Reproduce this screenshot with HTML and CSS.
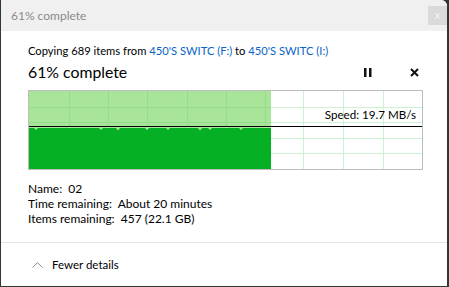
FILE: index.html
```html
<!DOCTYPE html>
<html lang="en">
<head>
    <meta charset="UTF-8">
    <title>61% complete</title>
    <link rel="stylesheet" href="styles.css">
</head>
<body>
<div class="window">
    <div class="titlebar">
        <span class="title">61% complete</span>
        <span class="title-close">x</span>
    </div>
    <div class="main">
        <div class="from">Copying 689 items from <a href="#">450'S SWITC (F:)</a> to <a href="#">450'S SWITC (I:)</a></div>
        <div class="status">
            <span class="percent">61% complete</span>
            <span class="controls">
                <svg class="pause" width="8" height="9" viewBox="0 0 8 9"><rect x="0" y="0" width="2.5" height="9" fill="#111"/><rect x="5" y="0" width="2.5" height="9" fill="#111"/></svg>
                <svg class="stop" width="9" height="9" viewBox="0 0 9 9"><path d="M1 1L8 8M8 1L1 8" stroke="#111" stroke-width="2"/></svg>
            </span>
        </div>
        <div class="graph">
            <svg width="393" height="78" viewBox="0 0 393 78">
                <rect x="0" y="0" width="242" height="78" fill="#a8e49a"/>
                <g stroke="#cdf2d1" stroke-width="1">
                    <line x1="0" y1="16.5" x2="393" y2="16.5"/>
                    <line x1="0" y1="31.5" x2="393" y2="31.5"/>
                    <line x1="0" y1="47.5" x2="393" y2="47.5"/>
                    <line x1="0" y1="62.5" x2="393" y2="62.5"/>
                    <line x1="40.5" y1="0" x2="40.5" y2="78"/>
                    <line x1="79.5" y1="0" x2="79.5" y2="78"/>
                    <line x1="118.5" y1="0" x2="118.5" y2="78"/>
                    <line x1="158.5" y1="0" x2="158.5" y2="78"/>
                    <line x1="197.5" y1="0" x2="197.5" y2="78"/>
                    <line x1="236.5" y1="0" x2="236.5" y2="78"/>
                    <line x1="274.5" y1="0" x2="274.5" y2="78"/>
                    <line x1="314.5" y1="0" x2="314.5" y2="78"/>
                    <line x1="354.5" y1="0" x2="354.5" y2="78"/>
                </g>
                <g stroke="#97dc88" stroke-width="1">
                    <line x1="0" y1="16.5" x2="242" y2="16.5"/>
                    <line x1="0" y1="31.5" x2="242" y2="31.5"/>
                    <line x1="40.5" y1="0" x2="40.5" y2="36"/>
                    <line x1="79.5" y1="0" x2="79.5" y2="36"/>
                    <line x1="118.5" y1="0" x2="118.5" y2="36"/>
                    <line x1="158.5" y1="0" x2="158.5" y2="36"/>
                    <line x1="197.5" y1="0" x2="197.5" y2="36"/>
                    <line x1="236.5" y1="0" x2="236.5" y2="36"/>
                </g>
                <path d="M0 37 L5 37 L7 39 L9 37 L70 37 L72 39 L74 37 L87 37 L89 39.5 L91 37 L116 37 L118 39 L120 37 L137 37 L139 39 L141 37 L169 37 L171 39.5 L173 37 L179 37 L181 39 L183 37 L210 37 L212 39 L214 37 L242 37 L242 78 L0 78 Z" fill="#06b025"/>
                <line x1="0" y1="35.5" x2="393" y2="35.5" stroke="#000" stroke-width="1"/>
                <text x="387" y="28" text-anchor="end" class="speed">Speed: 19.7 MB/s</text>
            </svg>
        </div>
        <div class="details">
            <div>Name:&nbsp; 02</div>
            <div>Time remaining:&nbsp; About 20 minutes</div>
            <div>Items remaining:&nbsp; 457 (22.1 GB)</div>
        </div>
    </div>
    <div class="footer">
        <svg width="11" height="6" viewBox="0 0 11 6"><path d="M0.5 5.5L5.5 0.7L10.5 5.5" fill="none" stroke="#8a8a8a" stroke-width="1"/></svg>
        <span>Fewer details</span>
    </div>
</div>
</body>
</html>
```

FILE: styles.css
```css
* {
    margin: 0;
    padding: 0;
    box-sizing: border-box;
}

body {
    background: #2f3a34;
    font-family: Lato, "Noto Sans", sans-serif;
    font-size: 11.5px;
    color: #000;
}

.window {
    width: 446px;
    height: 286px;
    margin-left: 1px;
    background: #fff;
    border-top-right-radius: 6px;
    display: flex;
    flex-direction: column;
    overflow: hidden;
}

.titlebar {
    height: 31px;
    flex: none;
    background: #f0f0f0;
    display: flex;
    align-items: center;
    justify-content: space-between;
    padding-left: 10px;
}

.title {
    color: #8a8a8a;
    font-size: 12px;
}

.title-close {
    width: 19px;
    height: 19px;
    background: #dadada;
    color: #f2f2f2;
    font-size: 11px;
    line-height: 18px;
    text-align: center;
}

.main {
    padding: 12px 0 0 27px;
    flex: 1;
}

.from {
    height: 16px;
    line-height: 16px;
    font-size: 11.2px;
}

.from a {
    color: #0a64c8;
    text-decoration: none;
}

.status {
    height: 20px;
    margin-top: 3px;
    display: flex;
    align-items: center;
    justify-content: space-between;
    width: 391px;
}

.percent {
    font-size: 15.8px;
    line-height: 20px;
}

.controls {
    display: flex;
    align-items: center;
    gap: 38px;
}

.graph {
    width: 395px;
    height: 80px;
    margin-top: 8px;
    border: 1px solid #bcbcbc;
}

.graph svg {
    display: block;
}

.speed {
    font-family: Lato, "Noto Sans", sans-serif;
    font-size: 11.6px;
    fill: #000;
}

.details {
    margin-top: 11px;
    line-height: 15px;
    font-size: 12px;
}

.footer {
    height: 44px;
    flex: none;
    border-top: 1px solid #e3e3e3;
    display: flex;
    align-items: center;
    padding-left: 31px;
    gap: 9px;
}
```
